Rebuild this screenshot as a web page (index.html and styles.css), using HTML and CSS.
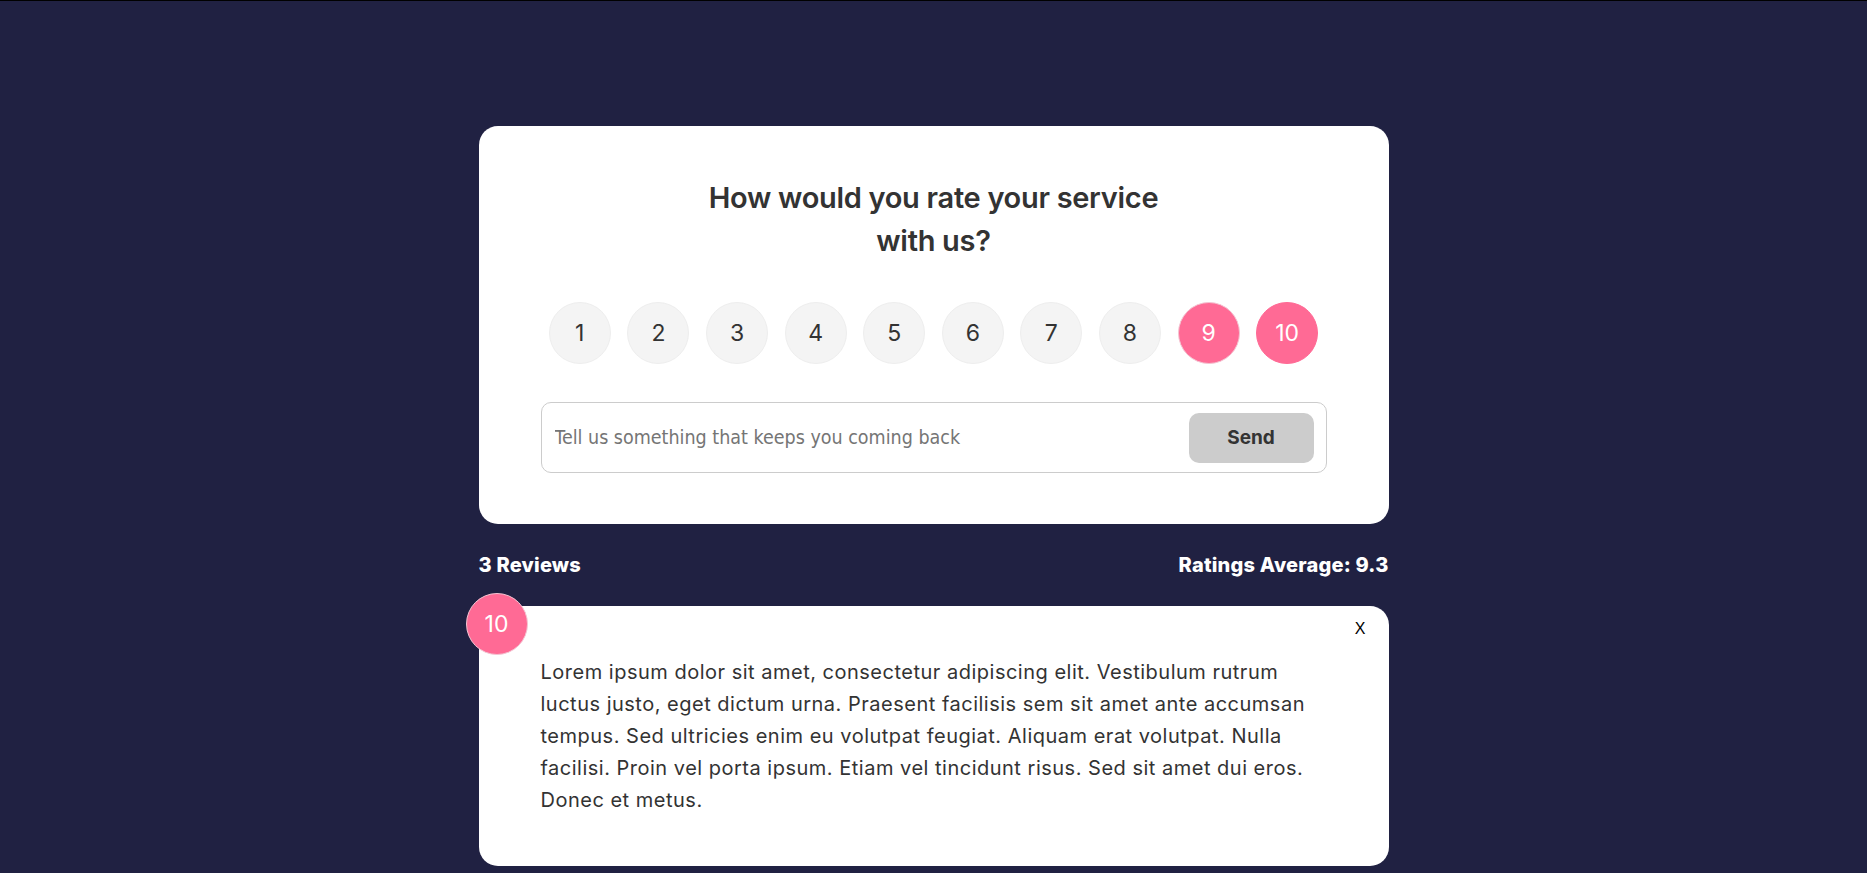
FILE: index.html
```html
<!DOCTYPE html>
<html lang="en">
<head>
<meta charset="utf-8">
<title>Feedback</title>
<link rel="stylesheet" href="styles.css">
</head>
<body>
<main class="container">
  <section class="card form-card">
    <h2 class="title">How would you rate your service with us?</h2>
    <ul class="rating">
      <li class="rate">1</li>
      <li class="rate">2</li>
      <li class="rate">3</li>
      <li class="rate">4</li>
      <li class="rate">5</li>
      <li class="rate">6</li>
      <li class="rate">7</li>
      <li class="rate">8</li>
      <li class="rate rate-on">9</li>
      <li class="rate rate-sel">10</li>
    </ul>
    <div class="input-group">
      <input class="text-input" type="text" placeholder="Tell us something that keeps you coming back">
      <button class="btn" disabled>Send</button>
    </div>
  </section>
  <div class="stats">
    <h4 class="stat">3 Reviews</h4>
    <h4 class="stat">Ratings Average: 9.3</h4>
  </div>
  <section class="card review-card">
    <div class="num-display">10</div>
    <button class="close">X</button>
    <p class="review-text">Lorem ipsum dolor sit amet, consectetur adipiscing elit. Vestibulum rutrum luctus justo, eget dictum urna. Praesent facilisis sem sit amet ante accumsan tempus. Sed ultricies enim eu volutpat feugiat. Aliquam erat volutpat. Nulla facilisi. Proin vel porta ipsum. Etiam vel tincidunt risus. Sed sit amet dui eros. Donec et metus.</p>
  </section>
</main>
</body>
</html>
```

FILE: styles.css
```css
* { box-sizing: border-box; }

html, body { margin: 0; padding: 0; }

body {
  background: #202142;
  border-top: 1px solid #000;
  font-family: "Inter", "Open Sans", sans-serif;
  color: #fff;
  min-height: 873px;
}

.container {
  width: 910px;
  margin: 0 auto;
  padding-top: 125px;
}

.card {
  background: #fff;
  color: #333;
  border-radius: 19px;
  position: relative;
}

.form-card {
  padding: 50px 62px 51px;
}

.title {
  margin: 0 auto;
  max-width: 480px;
  text-align: center;
  font-size: 29px;
  line-height: 43px;
  font-weight: 600;
  letter-spacing: -0.3px;
  color: #333;
}

.rating {
  list-style: none;
  margin: 40px 0 38px;
  padding: 0;
  display: flex;
  justify-content: space-around;
  align-items: center;
}

.rate {
  width: 62px;
  height: 62px;
  border-radius: 50%;
  background: #f4f4f4;
  border: 1px solid #eee;
  display: flex;
  align-items: center;
  justify-content: center;
  font-size: 23px;
  color: #333;
}

.rate-on {
  background: #ff6a95;
  border-color: #f4c4d2;
  color: #fff;
}

.rate-sel {
  background: #ff6a95;
  border-color: #ff6a95;
  color: #fff;
}

.input-group {
  display: flex;
  align-items: center;
  height: 71px;
  border: 1px solid #ccc;
  border-radius: 10px;
  padding: 0 12px 0 13px;
}

.text-input {
  flex: 1;
  border: none;
  outline: none;
  background: transparent;
  font-family: "DejaVu Sans Condensed", "DejaVu Sans", sans-serif;
  font-size: 19.5px;
  color: #333;
  padding: 0;
}

.text-input::placeholder { color: #757575; }

.btn {
  width: 125px;
  height: 50px;
  border: 0;
  border-radius: 10px;
  background: #ccc;
  color: #333;
  font-family: "Inter", sans-serif;
  font-weight: 700;
  font-size: 19px;
}

.stats {
  display: flex;
  justify-content: space-between;
  align-items: center;
  margin: 26px 0;
}

.stat {
  margin: 0;
  font-size: 20px;
  line-height: 30px;
  font-weight: 800;
  letter-spacing: 0.2px;
  color: #fff;
}

.review-card {
  padding: 50px 62px;
}

.num-display {
  position: absolute;
  top: -13px;
  left: -13px;
  width: 62px;
  height: 62px;
  border-radius: 50%;
  background: #ff6a95;
  border: 1px solid #f4c4d2;
  color: #fff;
  font-size: 23px;
  display: flex;
  align-items: center;
  justify-content: center;
}

.close {
  position: absolute;
  top: 15px;
  right: 23px;
  padding: 0;
  border: none;
  background: none;
  font-family: "Liberation Sans", Arial, sans-serif;
  font-size: 16px;
  line-height: 16px;
  color: #000;
}

.review-text {
  margin: 0;
  font-size: 20px;
  line-height: 32px;
  letter-spacing: 0.5px;
  color: #333;
}
```
